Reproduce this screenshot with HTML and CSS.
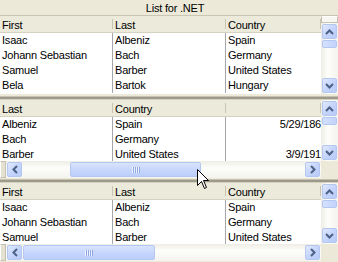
FILE: index.html
```html
<!DOCTYPE html>
<html lang="en">
<head>
    <meta charset="UTF-8">
    <title>List for .NET</title>
    <link rel="stylesheet" href="styles.css">
</head>
<body>

    <div class="grid">
        <div class="caption">List for .NET</div>

        <!-- top pane -->
        <div class="pane pane-top">
            <div class="view">
                <div class="header">
                    <span class="cell c1">First</span>
                    <span class="cell c2">Last</span>
                    <span class="cell c3">Country</span>
                </div>
                <div class="row"><span class="cell c1">Isaac</span><span class="cell c2">Albeniz</span><span class="cell c3">Spain</span></div>
                <div class="row"><span class="cell c1">Johann Sebastian</span><span class="cell c2">Bach</span><span class="cell c3">Germany</span></div>
                <div class="row"><span class="cell c1">Samuel</span><span class="cell c2">Barber</span><span class="cell c3">United States</span></div>
                <div class="row"><span class="cell c1">Bela</span><span class="cell c2">Bartok</span><span class="cell c3">Hungary</span></div>
            </div>
            <div class="vscroll">
                <div class="splitbox-v"></div>
                <div class="btn"><svg width="9" height="6"><polyline points="1,5 4.5,1.5 8,5" /></svg></div>
                <div class="thumb-v"></div>
                <div class="btn btn-end"><svg width="9" height="6"><polyline points="1,1 4.5,4.5 8,1" /></svg></div>
            </div>
        </div>

        <div class="splitter"></div>

        <!-- middle pane, scrolled right -->
        <div class="pane">
            <div class="view">
                <div class="header">
                    <span class="cell c1">Last</span>
                    <span class="cell c2">Country</span>
                    <span class="cell c3"></span>
                </div>
                <div class="row"><span class="cell c1">Albeniz</span><span class="cell c2">Spain</span><span class="cell c3 date">5/29/186</span></div>
                <div class="row"><span class="cell c1">Bach</span><span class="cell c2">Germany</span><span class="cell c3 date"></span></div>
                <div class="row"><span class="cell c1">Barber</span><span class="cell c2">United States</span><span class="cell c3 date">3/9/191</span></div>
            </div>
            <div class="vscroll">
                <div class="btn"><svg width="9" height="6"><polyline points="1,5 4.5,1.5 8,5" /></svg></div>
                <div class="thumb-v"></div>
                <div class="btn btn-end"><svg width="9" height="6"><polyline points="1,1 4.5,4.5 8,1" /></svg></div>
            </div>
            <div class="hscroll">
                <div class="splitbox-h"></div>
                <div class="btn"><svg width="6" height="9"><polyline points="5,1 1.5,4.5 5,8" /></svg></div>
                <div class="thumb-h mid"><span class="grip"></span></div>
                <div class="btn btn-end"><svg width="6" height="9"><polyline points="1,1 4.5,4.5 1,8" /></svg></div>
            </div>
            <div class="corner"></div>
        </div>

        <div class="splitter splitter-b"></div>

        <!-- bottom pane -->
        <div class="pane">
            <div class="view">
                <div class="header">
                    <span class="cell c1">First</span>
                    <span class="cell c2">Last</span>
                    <span class="cell c3">Country</span>
                </div>
                <div class="row"><span class="cell c1">Isaac</span><span class="cell c2">Albeniz</span><span class="cell c3">Spain</span></div>
                <div class="row"><span class="cell c1">Johann Sebastian</span><span class="cell c2">Bach</span><span class="cell c3">Germany</span></div>
                <div class="row"><span class="cell c1">Samuel</span><span class="cell c2">Barber</span><span class="cell c3">United States</span></div>
            </div>
            <div class="vscroll">
                <div class="btn"><svg width="9" height="6"><polyline points="1,5 4.5,1.5 8,5" /></svg></div>
                <div class="thumb-v"></div>
                <div class="btn btn-end"><svg width="9" height="6"><polyline points="1,1 4.5,4.5 8,1" /></svg></div>
            </div>
            <div class="hscroll">
                <div class="splitbox-h"></div>
                <div class="btn"><svg width="6" height="9"><polyline points="5,1 1.5,4.5 5,8" /></svg></div>
                <div class="thumb-h low"><span class="grip"></span></div>
                <div class="btn btn-end"><svg width="6" height="9"><polyline points="1,1 4.5,4.5 1,8" /></svg></div>
            </div>
            <div class="corner"></div>
        </div>
    </div>

    <!-- mouse pointer -->
    <svg class="pointer" width="13" height="21" viewBox="0 0 13 21">
        <polygon points="0.5,0.5 0.5,16.5 4.5,12.5 7.5,19.5 9.5,18.5 6.5,11.5 11.5,11.5" />
    </svg>

</body>
</html>
```

FILE: styles.css
```css
body {
    margin: 0;
    font-family: "Liberation Sans", Arial, sans-serif;
    font-size: 11px;
    letter-spacing: -0.2px;
    color: #000;
    background: #ece9d8;
}
.grid {
    width: 338px;
    height: 262px;
    display: flex;
    flex-direction: column;
    background: #ece9d8;
    overflow: hidden;
}
.caption {
    height: 15px;
    line-height: 16px;
    text-align: center;
    padding-left: 12px;
    border-bottom: 1px solid #c9c6b6;
}
.pane {
    height: 78px;
    flex: none;
    display: grid;
    grid-template-columns: 321px 17px;
    grid-template-rows: 61px 17px;
    background: #fff;
    overflow: hidden;
}
.pane-top {
    grid-template-rows: 78px;
}
.view {
    overflow: hidden;
    min-width: 0;
}
.header, .row {
    display: flex;
    white-space: nowrap;
}
.header {
    height: 16px;
    background: #ebeadb;
    border-bottom: 1px solid #d6d2c2;
}
.row {
    height: 15px;
    line-height: 15px;
}
.cell {
    flex: none;
    box-sizing: border-box;
    padding-left: 2px;
    overflow: hidden;
}
.header .cell {
    position: relative;
    line-height: 16px;
    padding-top: 1px;
}
.header .cell::after {
    content: "";
    position: absolute;
    right: 0;
    top: 3px;
    bottom: 3px;
    width: 1px;
    background: #c7c5b2;
    box-shadow: 1px 0 0 #fff;
}
.c1, .c2 {
    width: 113px;
}
.row .c1, .row .c2 {
    border-right: 1px solid #a7a6aa;
}
.c3 {
    width: 95px;
}
.date {
    text-align: right;
    padding-right: 0;
}

/* splitter bars between panes */
.splitter {
    height: 6px;
    flex: none;
    background: linear-gradient(#ece9d8 0 2px, #c5c2b2 2px 3px, #9d9a8b 3px 5px, #d6d2c2 5px);
}
.splitter-b {
    height: 5px;
    background: linear-gradient(#ece9d8 0 1px, #c5c2b2 1px 2px, #9d9a8b 2px 4px, #d6d2c2 4px);
}

/* scroll bars */
.vscroll {
    grid-column: 2;
    grid-row: 1;
    display: flex;
    flex-direction: column;
    padding: 1px;
    gap: 1px;
    background: linear-gradient(90deg, #eeede5, #fdfdfa 40%, #f4f3ee);
}
.hscroll {
    grid-column: 1;
    grid-row: 2;
    display: flex;
    align-items: center;
    padding: 1px 1px 1px 0;
    background: linear-gradient(#eeede5, #fdfdfa 40%, #f4f3ee);
}
.corner {
    grid-column: 2;
    grid-row: 2;
    background: #ece9d8;
}
.btn {
    width: 15px;
    height: 15px;
    flex: none;
    box-sizing: border-box;
    border: 1px solid #b4c7f1;
    border-radius: 2px;
    background: linear-gradient(135deg, #e1e9fd, #c5d5fc 50%, #b7cbf8);
    display: flex;
    align-items: center;
    justify-content: center;
}
.btn svg polyline {
    fill: none;
    stroke: #4d6185;
    stroke-width: 2;
}
.btn-end {
    margin-top: auto;
    margin-left: auto;
}
.vscroll .btn-end {
    margin-left: 0;
}
.thumb-v {
    height: 8px;
    flex: none;
    box-sizing: border-box;
    border: 1px solid #b4c7f1;
    border-radius: 2px;
    background: linear-gradient(90deg, #d4e0fd, #c3d3fc);
}
.splitbox-v {
    height: 5px;
    flex: none;
    margin: -1px -1px 0;
    border: 1px solid #c5c2b2;
    border-top-color: #fff;
    background: #f7f6f1;
}
.splitbox-h {
    width: 6px;
    height: 17px;
    flex: none;
    margin-right: 1px;
    box-sizing: border-box;
    border: 1px solid #c5c2b2;
    border-left-color: #fff;
    background: #e4e1d2;
}
.thumb-h {
    height: 15px;
    flex: none;
    box-sizing: border-box;
    border: 1px solid #b4c7f1;
    border-radius: 2px;
    background: linear-gradient(#d8e3fd, #c4d4fc 60%, #bccefb);
    display: flex;
    align-items: center;
    justify-content: center;
}
.thumb-h.mid {
    margin-left: 48px;
    width: 131px;
}
.thumb-h.low {
    margin-left: 1px;
    width: 132px;
}
.grip {
    width: 8px;
    height: 6px;
    background: repeating-linear-gradient(90deg, #eef3fe 0 1px, #8fa7e0 1px 2px);
}

.pointer {
    position: absolute;
    left: 197px;
    top: 169px;
}
.pointer polygon {
    fill: #fff;
    stroke: #000;
    stroke-width: 1;
}
```
